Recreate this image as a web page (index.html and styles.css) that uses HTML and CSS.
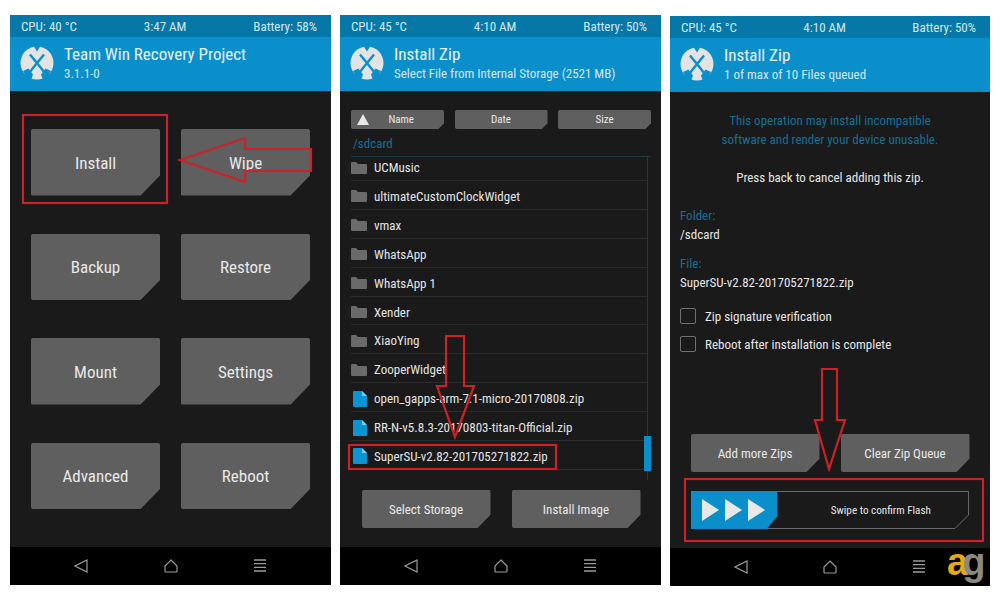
FILE: index.html
```html
<!DOCTYPE html>
<html lang="en">

<head>
  <meta charset="UTF-8">
  <title>TWRP install steps</title>
  <link rel="stylesheet" href="styles.css">
</head>

<body>
  <svg width="0" height="0" class="defs">
    <symbol id="logo" viewBox="0 0 34 34">
      <circle cx="17" cy="17" r="16.500" fill="#e3e3e3" />
      <path fill="none" stroke="#0b8fca" stroke-width="2.400" d="M10 8.500 17 17 24 8.500M17 17 9.500 26.500M17 17 24.500 26.500" />
      <path fill="#0b8fca" d="M13.500 0H20.500L17 5.500ZM3 25 8.500 22.500 13 28.500 11 34 7 33ZM31 25 25.500 22.500 21 28.500 23 34 27 33Z" />
    </symbol>
    <symbol id="folder" viewBox="0 0 16 12">
      <path fill="#6a6a6a" d="M0 1q0-1 1-1h4l2 2h8q1 0 1 1v8q0 1-1 1H1q-1 0-1-1z" />
    </symbol>
    <symbol id="file" viewBox="0 0 14 16">
      <path fill="#0b94d3" d="M1 0h8l5 5v10q0 1-1 1H1q-1 0-1-1V1q0-1 1-1z" />
      <path fill="#7fc6e6" d="M9 0l5 5H9z" />
    </symbol>
    <symbol id="back" viewBox="0 0 14 14">
      <path fill="none" stroke="#9a9a9a" stroke-width="1.200" d="M13 1v12L1 7z" />
    </symbol>
    <symbol id="home" viewBox="0 0 14 14">
      <path fill="none" stroke="#9a9a9a" stroke-width="1.200" d="M7 1l6 6v5q0 1-1 1H2q-1 0-1-1V7z" />
    </symbol>
    <symbol id="menu" viewBox="0 0 14 14">
      <path fill="none" stroke="#9a9a9a" stroke-width="1.300" d="M1 1h12M1 4.700h12M1 8.300h12M1 12h12" />
    </symbol>
  </svg>

  <div class="shots">
    <!-- main menu -->
    <section class="phone">
      <div class="status"><span>CPU: 40 °C</span><span>3:47 AM</span><span>Battery: 58%</span></div>
      <header class="head">
        <svg class="logo"><use href="#logo" /></svg>
        <div>
          <h1>Team Win Recovery Project</h1>
          <p>3.1.1-0</p>
        </div>
      </header>
      <main class="body menu">
        <div class="btn big">Install</div>
        <div class="btn big">Wipe</div>
        <div class="btn big">Backup</div>
        <div class="btn big">Restore</div>
        <div class="btn big">Mount</div>
        <div class="btn big">Settings</div>
        <div class="btn big">Advanced</div>
        <div class="btn big">Reboot</div>
      </main>
      <nav class="nav">
        <svg><use href="#back" /></svg>
        <svg><use href="#home" /></svg>
        <svg><use href="#menu" /></svg>
      </nav>
    </section>

    <!-- file picker -->
    <section class="phone">
      <div class="status"><span>CPU: 45 °C</span><span>4:10 AM</span><span>Battery: 50%</span></div>
      <header class="head">
        <svg class="logo"><use href="#logo" /></svg>
        <div>
          <h1>Install Zip</h1>
          <p>Select File from Internal Storage (2521 MB)</p>
        </div>
      </header>
      <main class="body picker">
        <div class="sort">
          <div class="btn tiny"><i class="tri"></i>Name</div>
          <div class="btn tiny">Date</div>
          <div class="btn tiny">Size</div>
        </div>
        <div class="path">/sdcard</div>
        <ul class="files">
          <li><svg class="ic"><use href="#folder" /></svg>UCMusic</li>
          <li><svg class="ic"><use href="#folder" /></svg>ultimateCustomClockWidget</li>
          <li><svg class="ic"><use href="#folder" /></svg>vmax</li>
          <li><svg class="ic"><use href="#folder" /></svg>WhatsApp</li>
          <li><svg class="ic"><use href="#folder" /></svg>WhatsApp 1</li>
          <li><svg class="ic"><use href="#folder" /></svg>Xender</li>
          <li><svg class="ic"><use href="#folder" /></svg>XiaoYing</li>
          <li><svg class="ic"><use href="#folder" /></svg>ZooperWidget</li>
          <li><svg class="ic doc"><use href="#file" /></svg>open_gapps-arm-7.1-micro-20170808.zip</li>
          <li><svg class="ic doc"><use href="#file" /></svg>RR-N-v5.8.3-20170803-titan-Official.zip</li>
          <li><svg class="ic doc"><use href="#file" /></svg>SuperSU-v2.82-201705271822.zip</li>
          <li class="thumb"></li>
        </ul>
        <div class="pair">
          <div class="btn mid">Select Storage</div>
          <div class="btn mid">Install Image</div>
        </div>
      </main>
      <nav class="nav">
        <svg><use href="#back" /></svg>
        <svg><use href="#home" /></svg>
        <svg><use href="#menu" /></svg>
      </nav>
    </section>

    <!-- confirm -->
    <section class="phone third">
      <div class="status"><span>CPU: 45 °C</span><span>4:10 AM</span><span>Battery: 50%</span></div>
      <header class="head">
        <svg class="logo"><use href="#logo" /></svg>
        <div>
          <h1>Install Zip</h1>
          <p>1 of max of 10 Files queued</p>
        </div>
      </header>
      <main class="body confirm">
        <p class="warn">This operation may install incompatible<br>software and render your device unusable.</p>
        <p class="press">Press back to cancel adding this zip.</p>
        <dl class="info">
          <dt>Folder:</dt>
          <dd>/sdcard</dd>
          <dt>File:</dt>
          <dd>SuperSU-v2.82-201705271822.zip</dd>
        </dl>
        <div class="check"><i></i>Zip signature verification</div>
        <div class="check"><i></i>Reboot after installation is complete</div>
        <div class="pair bottom">
          <div class="btn mid">Add more Zips</div>
          <div class="btn mid">Clear Zip Queue</div>
        </div>
        <div class="swipe">
          <svg class="track" viewBox="0 0 278 38"><path d="M.5.5H277.500V24L264 37.500H.5Z" /></svg>
          <div class="slider"><b></b><b></b><b></b></div>
          <span>Swipe to confirm Flash</span>
        </div>
      </main>
      <nav class="nav">
        <svg><use href="#back" /></svg>
        <svg><use href="#home" /></svg>
        <svg><use href="#menu" /></svg>
      </nav>
    </section>
  </div>

  <!-- red marks drawn on top of the screenshots -->
  <svg class="marks" width="1000" height="600" viewBox="0 0 1000 600">
    <g fill="none" stroke="#cb2229" stroke-width="2.200">
      <rect x="23" y="115" width="144" height="88" />
      <path d="M180 160 245 138V149H311V171H245V182Z" />
      <path d="M446 336H464V386H474L455 437 437 386H446Z" />
      <rect x="349" y="445" width="207" height="24" />
      <path d="M822 369H837V420H845L829 469 815 420H822Z" />
      <rect x="685" y="479" width="298" height="62" />
    </g>
  </svg>

  <div class="brand"><span class="a">a</span><span class="g">g</span></div>
</body>

</html>
```

FILE: styles.css
```css
* {
  box-sizing: border-box;
}

body {
  margin: 0;
  width: 1000px;
  height: 600px;
  overflow: hidden;
  background: #fff;
  position: relative;
  font-family: "Roboto Condensed", Roboto, sans-serif;
  font-stretch: condensed;
  color: #e6e6e6;
}

.defs {
  position: absolute;
}

.shots {
  display: flex;
  gap: 9px;
  padding: 15px 10px 0;
}

.phone {
  width: 321px;
  height: 570px;
  display: flex;
  flex-direction: column;
  background: #1a1a1a;
}

.third {
  margin-top: 1px;
  width: 320px;
}

.status {
  height: 22px;
  flex: none;
  display: flex;
  justify-content: space-between;
  align-items: center;
  padding: 0 14px 0 11px;
  background: #0578a8;
  font-size: 13px;
  color: #d4e6ee;
}

.head {
  height: 54px;
  flex: none;
  display: flex;
  align-items: center;
  gap: 10px;
  padding: 0 0 0 10px;
  background: #0b8fca;
}

.logo {
  width: 34px;
  height: 34px;
  margin-bottom: 2px;
}

h1 {
  margin: 0;
  font-size: 17px;
  font-weight: 400;
  line-height: 20px;
  color: #e8f2f7;
}

.head p {
  margin: 0;
  font-size: 13px;
  line-height: 20px;
  color: #d5e7f0;
}

.body {
  flex: 1;
  min-height: 0;
}

.btn {
  display: flex;
  align-items: center;
  justify-content: center;
  background: #5f5f5f;
  border-radius: 2px;
  color: #e8e8e8;
}

.big {
  height: 66.500px;
  font-size: 17px;
  padding-top: 1px;
  clip-path: polygon(0 0, 100% 0, 100% 70%, 85% 100%, 0 100%);
}

.mid {
  width: 129px;
  height: 38px;
  font-size: 13px;
  clip-path: polygon(0 0, 100% 0, 100% 65%, 90% 100%, 0 100%);
}

.tiny {
  width: 93px;
  height: 19px;
  font-size: 11px;
  clip-path: polygon(0 0, 100% 0, 100% 70%, 94% 100%, 0 100%);
}

.menu {
  display: grid;
  grid-template-columns: 129px 129px;
  justify-content: center;
  column-gap: 21px;
  row-gap: 38px;
  padding-top: 38px;
  align-content: start;
}

.picker {
  padding: 19px 10px 0 11px;
  display: flex;
  flex-direction: column;
}

.sort {
  display: flex;
  justify-content: space-between;
}

.tri {
  width: 0;
  height: 0;
  border: 6px solid transparent;
  border-top: 0;
  border-bottom: 11px solid #e8e8e8;
  margin: 0 auto 0 6px;
}

.tiny:first-child {
  padding-right: 30px;
}

.path {
  height: 28px;
  font-size: 13px;
  line-height: 30px;
  padding-left: 2px;
  color: #166f96;
  border-bottom: 1px solid #1d3a47;
}

.files {
  list-style: none;
  margin: 0;
  padding: 0;
  position: relative;
  height: 323px;
  border-right: 1px solid #333;
  margin-right: 3px;
}

.files li {
  height: 28.900px;
  display: flex;
  align-items: center;
  gap: 7px;
  padding-top: 3px;
  font-size: 13px;
  color: #e4e4e4;
  border-bottom: 1px solid #2c2c2c;
}

.files li:first-child {
  height: 24px;
  padding: 0 0 2px;
}

.files .thumb {
  position: absolute;
  right: -4px;
  top: 279px;
  width: 7px;
  height: 35px;
  background: #0b8fca;
  border: 0;
}

.ic {
  width: 16px;
  height: 12px;
}

.doc {
  width: 14px;
  height: 16px;
  margin: 0 0 0 2px;
}

.pair {
  display: flex;
  gap: 21px;
  justify-content: center;
  margin-top: 10px;
}

.confirm {
  padding: 19px 10px 0;
  font-size: 13px;
  display: flex;
  flex-direction: column;
}

.confirm p {
  margin: 0;
  text-align: center;
}

.warn {
  line-height: 19px;
  color: #166f96;
}

.confirm .press {
  margin-top: 19px;
  line-height: 19px;
}

.info {
  margin: 19px 0 0;
  line-height: 19px;
}

.info dt {
  color: #166f96;
}

.info dd {
  margin: 0 0 10px;
}

.check {
  display: flex;
  align-items: center;
  gap: 9px;
  height: 16px;
  margin-top: 6px;
  margin-bottom: 6px;
}

.check i {
  width: 16px;
  height: 16px;
  border: 1px solid #6f6f6f;
  border-radius: 2px;
}

.bottom {
  margin-top: 76px;
}

.swipe {
  margin: 19px 11px 0;
  height: 38px;
  position: relative;
  display: flex;
  align-items: center;
  justify-content: flex-end;
  padding-right: 38px;
  font-size: 11.200px;
}

.track {
  position: absolute;
  left: 0;
  top: 0;
  width: 278px;
  height: 38px;
  fill: none;
  stroke: #6a6a6a;
}

.slider {
  position: absolute;
  left: 0;
  top: 0;
  width: 86px;
  height: 38px;
  display: flex;
  align-items: center;
  gap: 6px;
  padding-left: 11px;
  background: #0b8fca;
  clip-path: polygon(0 0, 100% 0, 100% 68%, 88% 100%, 0 100%);
}

.slider b {
  width: 0;
  height: 0;
  border: 11px solid transparent;
  border-right: 0;
  border-left: 17px solid #e8e8e8;
}

.swipe span {
  position: relative;
}

.nav {
  height: 38px;
  flex: none;
  display: flex;
  justify-content: space-between;
  align-items: center;
  padding: 0 64px;
  background: #000;
}

.nav svg {
  width: 14px;
  height: 14px;
}

.marks {
  position: absolute;
  left: 0;
  top: 0;
}

.brand {
  position: absolute;
  left: 947px;
  top: 541px;
  font-family: "Liberation Sans", sans-serif;
  font-stretch: normal;
  font-size: 38px;
  font-weight: 700;
  letter-spacing: -6px;
}

.brand .a {
  color: #e8a90f;
}

.brand .g {
  color: #8a8a80;
}
```
